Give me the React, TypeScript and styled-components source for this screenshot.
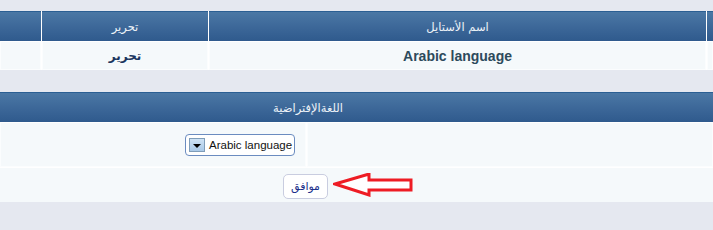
import styled, { createGlobalStyle } from "styled-components";

const GlobalStyle = createGlobalStyle`
  html, body {
    margin: 0;
    padding: 0;
    background: #e5e8f0;
    font-family: "DejaVu Sans", sans-serif;
  }
`;

const Page = styled.div`
  width: 713px;
  height: 230px;
  overflow: hidden;
  padding-top: 11px;
  box-sizing: border-box;
`;

const Table = styled.div<{ cols: string }>`
  display: grid;
  grid-template-columns: ${(props) => props.cols};
  direction: rtl;
  column-gap: 1px;
  background: #ffffff;
  margin-bottom: 22px;
`;

const HeadCell = styled.div<{ align?: string; padRight?: number }>`
  height: 30px;
  box-sizing: border-box;
  border-top: 1px solid #2b5f93;
  background: linear-gradient(to bottom, #4b78a5 0%, #3d6899 50%, #2f5a8d 100%);
  color: #eef3f8;
  font-size: 11.5px;
  display: flex;
  align-items: center;
  justify-content: ${(props) => props.align ?? "center"};
  padding-right: ${(props) => props.padRight ?? 0}px;
  white-space: nowrap;
`;

const Cell = styled.div<{ height: number }>`
  height: ${(props) => props.height}px;
  box-sizing: border-box;
  background: #f5f9fb;
  border: 1px solid #fbfdfe;
  border-top-color: #ffffff;
  display: flex;
  align-items: center;
  justify-content: center;
`;

const StyleName = styled.span`
  font-family: "Liberation Sans", Arial, sans-serif;
  font-weight: bold;
  font-size: 14px;
  color: #2d4a5c;
`;

const EditLink = styled.span`
  font-weight: bold;
  font-size: 12px;
  color: #1b3560;
`;

const SelectCell = styled(Cell)`
  justify-content: flex-start;
  padding-right: 10px;
`;

const Select = styled.div`
  direction: ltr;
  width: 110px;
  height: 22px;
  box-sizing: border-box;
  border: 1px solid #6b8cc0;
  border-radius: 4px;
  background: #ffffff;
  display: flex;
  align-items: center;
  gap: 4px;
  padding-left: 3px;
  font-family: "Liberation Sans", Arial, sans-serif;
  font-size: 11.5px;
  white-space: nowrap;
  overflow: hidden;
  color: #111;
`;

const DropButton = styled.div`
  width: 16px;
  height: 14px;
  flex-shrink: 0;
  box-sizing: border-box;
  border: 1px solid #7f9db9;
  background: linear-gradient(to bottom, #cfe3f5, #a9c9e8);
  display: flex;
  align-items: center;
  justify-content: center;
  padding-top: 2px;
`;

const Triangle = styled.div`
  width: 0;
  height: 0;
  border-left: 4px solid transparent;
  border-right: 4px solid transparent;
  border-top: 4px solid #000;
`;

const SubmitRow = styled.div`
  height: 35px;
  box-sizing: border-box;
  background: #f5f9fb;
  border-top: 1px solid #ffffff;
  display: flex;
  align-items: center;
  gap: 5px;
  padding-left: 283px;
`;

const OkButton = styled.button`
  width: 45px;
  height: 25px;
  box-sizing: border-box;
  border: 1px solid #c9cde0;
  border-radius: 5px;
  background: #ffffff;
  color: #1b2f8a;
  font-family: "DejaVu Sans", sans-serif;
  font-size: 11px;
  padding: 0;
  margin-top: 3px;
`;

const Arrow = () => (
  <svg width="82" height="24" viewBox="0 0 82 24">
    <polygon
      points="2,11 36,1 36,7 78,7 78,17 36,17 36,22"
      fill="#ffffff"
      stroke="#ee1c24"
      strokeWidth="3"
      strokeLinejoin="miter"
    />
  </svg>
);

export default function App() {
  return (
    <Page>
      <GlobalStyle />
      <Table cols="6px 497px 166px 41px">
        <HeadCell />
        <HeadCell>اسم الأستايل</HeadCell>
        <HeadCell>تحرير</HeadCell>
        <HeadCell />
        <Cell height={29} />
        <Cell height={29}>
          <StyleName>Arabic language</StyleName>
        </Cell>
        <Cell height={29}>
          <EditLink>تحرير</EditLink>
        </Cell>
        <Cell height={29} />
      </Table>
      <Table cols="406px 306px">
        <HeadCell style={{ gridColumn: "1 / span 2" }} align="flex-start" padRight={370}>
          اللغةالإفتراضية
        </HeadCell>
        <Cell height={45} />
        <SelectCell height={45}>
          <Select>
            <DropButton>
              <Triangle />
            </DropButton>
            Arabic language
          </Select>
        </SelectCell>
        <SubmitRow style={{ gridColumn: "1 / span 2", direction: "ltr" }}>
          <OkButton>موافق</OkButton>
          <Arrow />
        </SubmitRow>
      </Table>
    </Page>
  );
}
